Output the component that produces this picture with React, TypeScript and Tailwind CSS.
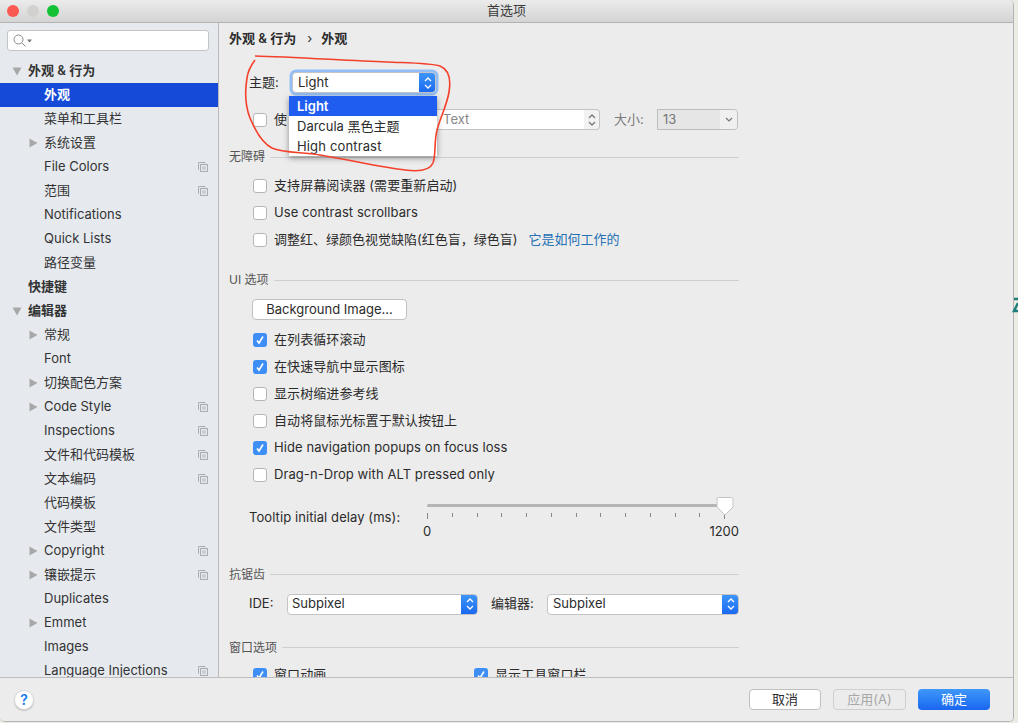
import React from "react";

const FONT = { fontFamily: '"Inter","Noto Sans CJK SC",sans-serif' };

function Tri({ down = false }: { down?: boolean }) {
  return (
    <svg width="10" height="10" viewBox="0 0 10 10" className="shrink-0">
      {down ? <path d="M0.5 1.5H9.5L5 9.5Z" fill="#a8a8a8" /> : <path d="M1.5 0.5V9.5L9.5 5Z" fill="#a8a8a8" />}
    </svg>
  );
}

function CopyIco() {
  return (
    <svg width="10" height="10" viewBox="0 0 10 10" fill="none" stroke="#a7adb3" strokeWidth="1" className="shrink-0">
      <path d="M1 7.5H0.5V0.5H7V1.5" />
      <rect x="2.5" y="2.5" width="7" height="7" />
      <path d="M4 5H8M4 7H8" strokeWidth="0.8" />
    </svg>
  );
}

type Item = { t: string; lvl: 0 | 1; arrow?: boolean; down?: boolean; ico?: boolean; sel?: boolean; bold?: boolean };
const items: Item[] = [
  { t: "外观 & 行为", lvl: 0, arrow: true, down: true, bold: true },
  { t: "外观", lvl: 1, sel: true },
  { t: "菜单和工具栏", lvl: 1 },
  { t: "系统设置", lvl: 1, arrow: true },
  { t: "File Colors", lvl: 1, ico: true },
  { t: "范围", lvl: 1, ico: true },
  { t: "Notifications", lvl: 1 },
  { t: "Quick Lists", lvl: 1 },
  { t: "路径变量", lvl: 1 },
  { t: "快捷键", lvl: 0, bold: true },
  { t: "编辑器", lvl: 0, arrow: true, down: true, bold: true },
  { t: "常规", lvl: 1, arrow: true },
  { t: "Font", lvl: 1 },
  { t: "切换配色方案", lvl: 1, arrow: true },
  { t: "Code Style", lvl: 1, arrow: true, ico: true },
  { t: "Inspections", lvl: 1, ico: true },
  { t: "文件和代码模板", lvl: 1, ico: true },
  { t: "文本编码", lvl: 1, ico: true },
  { t: "代码模板", lvl: 1 },
  { t: "文件类型", lvl: 1 },
  { t: "Copyright", lvl: 1, arrow: true, ico: true },
  { t: "镶嵌提示", lvl: 1, arrow: true, ico: true },
  { t: "Duplicates", lvl: 1 },
  { t: "Emmet", lvl: 1, arrow: true },
  { t: "Images", lvl: 1 },
  { t: "Language Injections", lvl: 1, ico: true },
];

function Row({ it }: { it: Item }) {
  return (
    <div className={`relative flex h-6 shrink-0 items-center text-[13px] ${it.sel ? "bg-[#1549d8] text-white font-semibold" : "text-[#333]"} ${it.bold ? "font-semibold" : ""}`}>
      <div className={it.lvl === 0 ? "flex w-[28px] justify-end pr-[6px]" : "flex w-[44px] justify-end pr-[6px]"}>
        {it.arrow ? <Tri down={it.down} /> : null}
      </div>
      <span className="flex-1">{it.t}</span>
      {it.ico ? <div className="mr-[10px]"><CopyIco /></div> : null}
    </div>
  );
}

function Box({ on = false }: { on?: boolean }) {
  return on ? (
    <div className="flex h-[14px] w-[14px] shrink-0 items-center justify-center rounded-[3px] bg-[#3d8ff5]">
      <svg width="10" height="10" viewBox="0 0 10 10" fill="none" stroke="white" strokeWidth="1.6"><path d="M2 5.5L4 8L8 1.5" /></svg>
    </div>
  ) : (
    <div className="h-[14px] w-[14px] shrink-0 rounded-[3px] border border-[#b5b5b5] bg-white" />
  );
}

function Check({ on, children }: { on?: boolean; children: React.ReactNode }) {
  return (
    <div className="flex h-[27px] items-center gap-[7px] pl-[24px] text-[13px] tracking-[0.08px] text-[#2b2b2b]">
      <Box on={on} />
      <span>{children}</span>
    </div>
  );
}

function Section({ t, className = "" }: { t: string; className?: string }) {
  return (
    <div className={`flex h-[16px] items-center gap-[5px] text-[12px] text-[#555] ${className}`}>
      <span>{t}</span>
      <div className="h-px flex-1 bg-[#cfcfcf]" />
    </div>
  );
}

function Chev({ color = "white" }: { color?: string }) {
  return (
    <svg width="8" height="14" viewBox="0 0 8 14" fill="none" stroke={color} strokeWidth="1.3">
      <path d="M1 5L4 2L7 5M1 9L4 12L7 9" />
    </svg>
  );
}

function Combo({ v, className = "", pad = "pl-[4px]" }: { v: string; className?: string; pad?: string }) {
  return (
    <div className={`flex h-[21px] items-center overflow-hidden rounded-[4px] border border-[#c4c4c4] bg-white text-[13px] text-[#2b2b2b] ${className}`}>
      <span className={`flex-1 ${pad}`}>{v}</span>
      <div className="-my-px -mr-px flex h-[21px] w-[17px] items-center justify-center rounded-r-[4px] bg-gradient-to-b from-[#3f97f8] to-[#1a66f0]">
        <Chev />
      </div>
    </div>
  );
}

export default function App() {
  return (
    <div className="relative h-[723px] w-[1018px] overflow-hidden bg-[#ecebe4]" style={FONT}>
      <div className="flex h-[722px] w-[1014px] flex-col overflow-hidden rounded-[5px] border-r border-b border-[#b4b4b4] bg-[#ececec]">
        {/* title bar */}
        <div className="relative flex h-[23px] shrink-0 items-center justify-center border-b border-[#b3b3b3] bg-gradient-to-b from-[#ebebeb] to-[#d4d4d4] text-[13px] text-[#3a3a3a]">
          <div className="absolute left-[7px] top-[5px] flex gap-[8px]">
            <div className="h-3 w-3 rounded-full bg-[#fb5a52]" />
            <div className="h-3 w-3 rounded-full bg-[#d3d1d0]" />
            <div className="h-3 w-3 rounded-full bg-[#12c234]" />
          </div>
          <span>首选项</span>
        </div>

        <div className="flex min-h-0 flex-1">
          {/* sidebar */}
          <div className="flex w-[219px] shrink-0 flex-col overflow-hidden border-r border-[#b9b9b9] bg-[#e6eaef]">
            <div className="mx-[7px] mb-[8px] mt-[7px] flex h-[21px] w-[202px] shrink-0 items-center gap-[1px] rounded-[3px] border border-[#c4c4c4] bg-white pl-[5px]">
              <svg width="13" height="13" viewBox="0 0 13 13" fill="none" stroke="#8a8a8a" strokeWidth="1"><circle cx="5.5" cy="5.5" r="4.5" /><path d="M9 9L12.5 12.5" /></svg>
              <svg width="5" height="4" viewBox="0 0 5 4"><path d="M0 0.5H5L2.5 3.5Z" fill="#777" /></svg>
            </div>
            {items.map((it) => <Row key={it.t} it={it} />)}
          </div>

          {/* main */}
          <div className="min-w-0 flex-1 overflow-hidden pl-[10px] pr-[274px]">
            <div className="flex h-[31px] items-center text-[13px] font-semibold text-[#2b2b2b]">
              <span>外观 &amp; 行为</span>
              <span className="ml-[11px] mr-[9px] font-normal">›</span>
              <span>外观</span>
            </div>

            <div className="mt-[18px] flex h-[21px] items-center pl-[20px] text-[13px] text-[#2b2b2b]">
              <span className="w-[43px]">主题:</span>
              <div className="w-[144px]">
                <Combo v="Light" pad="pl-[5px]" className="shadow-[0_0_0_2.5px_#93bef5]" />
              </div>
            </div>

            <div className="mt-[16px] flex h-[21px] items-center text-[13px]">
              <div className="flex w-[205px] items-center gap-[7px] pl-[24px] text-[#2b2b2b]">
                <Box />
                <span>使</span>
              </div>
              <div className="flex h-[21px] w-[150px] items-center border border-r-0 border-[#c4c4c4] bg-white pl-[8px] text-[#888]">
                <span className="flex-1">Text</span>
              </div>
              <div className="flex h-[21px] w-[16px] items-center justify-center rounded-r-[4px] border border-l-0 border-[#c4c4c4] bg-[#f2f2f2]">
                <Chev color="#777" />
              </div>
              <span className="ml-[14px] w-[43px] text-[#7a7a7a]">大小:</span>
              <div className="flex h-[21px] w-[81px] items-center overflow-hidden rounded-r-[4px] border border-[#bcbcbc] bg-[#e6e6e6] text-[#777]">
                <span className="flex-1 pl-[5px]">13</span>
                <div className="flex h-full w-[17px] items-center justify-center bg-[#f0f0f0]">
                  <svg width="8" height="5" viewBox="0 0 8 5" fill="none" stroke="#777" strokeWidth="1.2"><path d="M1 1L4 4L7 1" /></svg>
                </div>
              </div>
            </div>

            <Section t="无障碍" className="mt-[19px]" />
            <div className="mt-[7px] pb-0">
              <Check>支持屏幕阅读器 (需要重新启动)</Check>
              <Check>Use contrast scrollbars</Check>
              <div className="flex h-[27px] items-center gap-[7px] pl-[24px] text-[13px] text-[#2b2b2b]">
                <Box />
                <span>调整红、绿颜色视觉缺陷(红色盲，绿色盲)</span>
                <span className="ml-[4px] text-[#2470b3]">它是如何工作的</span>
              </div>
            </div>

            <Section t="UI 选项" className="mt-[19px]" />
            <div className="ml-[23px] mt-[11px] flex h-[21px] w-[155px] items-center justify-center rounded-[4px] border border-[#c0c0c0] bg-white text-[13px] text-[#2b2b2b]">
              Background Image...
            </div>
            <div className="mt-[6px]">
              <Check on>在列表循环滚动</Check>
              <Check on>在快速导航中显示图标</Check>
              <Check>显示树缩进参考线</Check>
              <Check>自动将鼠标光标置于默认按钮上</Check>
              <Check on>Hide navigation popups on focus loss</Check>
              <Check>Drag-n-Drop with ALT pressed only</Check>
            </div>

            <div className="mt-[9px] flex items-start pl-[20px]">
              <span className="mt-[11px] w-[178px] text-[13px] tracking-[0.08px] text-[#2b2b2b]">Tooltip initial delay (ms):</span>
              <div className="relative w-[312px]">
                <div className="ml-0 mt-[7px] h-[3px] w-[306px] rounded-full bg-[#b4b4b4]" />
                <div className="mt-[6px] flex w-[298px] justify-between">
                  {Array.from({ length: 13 }).map((_, i) => (
                    <div key={i} className={i === 0 || i === 12 ? "h-[6px] w-px bg-[#888]" : "h-[4px] w-px bg-[#888]"} />
                  ))}
                </div>
                <div className="mt-[3px] flex w-[312px] justify-between text-[13px] text-[#2b2b2b]">
                  <span className="-ml-[4px]">0</span>
                  <span>1200</span>
                </div>
                <svg width="18" height="20" viewBox="0 0 18 20" className="absolute left-[289px] top-0">
                  <path d="M2.5 0.5H15.5Q17 0.5 17 2V10L9 18L1 10V2Q1 0.5 2.5 0.5Z" fill="white" stroke="#c4c4c4" />
                </svg>
              </div>
            </div>

            <Section t="抗锯齿" className="mt-[25px]" />
            <div className="mt-[11px] flex items-center text-[13px] text-[#2b2b2b]">
              <span className="w-[58px] pl-[20px]">IDE:</span>
              <Combo v="Subpixel" className="w-[191px]" />
              <span className="ml-[13px] w-[56px]">编辑器:</span>
              <Combo v="Subpixel" pad="pl-[5px]" className="w-[192px]" />
            </div>

            <Section t="窗口选项" className="mt-[25px]" />
            <div className="mt-[6px] flex">
              <div className="w-[221px] shrink-0"><Check on>窗口动画</Check></div>
              <Check on>显示工具窗口栏</Check>
            </div>
          </div>
        </div>

        {/* footer */}
        <div className="relative z-10 flex h-[44px] shrink-0 items-center border-t border-[#bdbdbd] bg-[#ececec] pl-[14px] pr-[23px]">
          <div className="flex h-5 w-5 items-center justify-center rounded-full border border-[#d8d8d8] bg-white text-[14px] font-semibold text-[#1a7bf2] shadow-[0_1px_1px_rgba(0,0,0,0.2)]">?</div>
          <div className="flex-1" />
          <div className="flex h-[21px] w-[72px] items-center justify-center rounded-[4px] border border-[#c0c0c0] bg-white text-[13px] text-[#2b2b2b]">取消</div>
          <div className="ml-[12px] flex h-[21px] w-[73px] items-center justify-center rounded-[4px] border border-[#cfcfcf] bg-[#ececec] text-[13px] text-[#a8a8a8]">应用(A)</div>
          <div className="ml-[12px] flex h-[21px] w-[72px] items-center justify-center rounded-[4px] bg-gradient-to-b from-[#3f97f8] to-[#1a66f0] text-[13px] text-white">确定</div>
        </div>
      </div>

      {/* popup */}
      <div className="absolute left-[289px] top-[96px] w-[148px] bg-white text-[13px] text-[#2b2b2b] shadow-[0_2px_6px_rgba(0,0,0,0.4)]">
        <div className="flex h-5 items-center bg-[#1f5cf0] pl-[8px] pt-px font-semibold text-white">Light</div>
        <div className="flex h-5 items-center pl-[8px] pt-px">Darcula 黑色主题</div>
        <div className="flex h-5 items-center pl-[8px] pt-px tracking-[0.15px]">High contrast</div>
      </div>

      {/* red annotation */}
      <svg width="1018" height="723" viewBox="0 0 1018 723" fill="none" className="pointer-events-none absolute left-0 top-0">
        <path d="M255 56C290 57 340 60 387 62C410 63 430 63 440 66C450 70 451 80 449 92C447 105 440 118 437 130C434 142 436 155 433 163C430 170 420 172 405 170C385 168 350 160 320 155C300 152 283 153 272 148C262 143 255 130 250 118C245 105 245 90 247 78C248 70 252 64 255 60" stroke="#f4402a" strokeWidth="1.6" />
        <path d="M1014 299H1018M1018 303L1014 311H1018" stroke="#1d7f78" strokeWidth="2.5" />
      </svg>
    </div>
  );
}
